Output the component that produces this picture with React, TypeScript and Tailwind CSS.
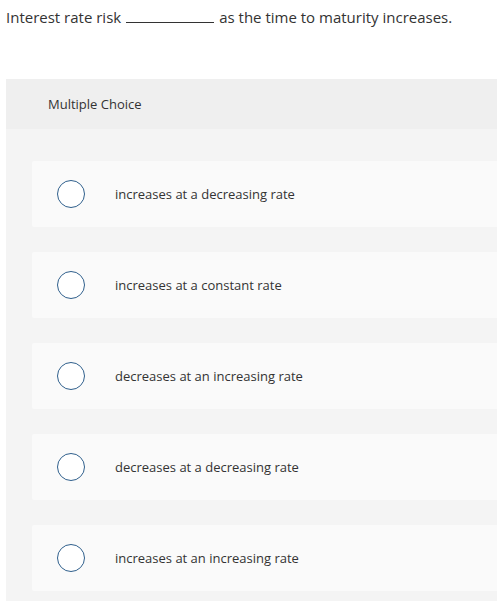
import React from "react";

const options = [
  "increases at a decreasing rate",
  "increases at a constant rate",
  "decreases at an increasing rate",
  "decreases at a decreasing rate",
  "increases at an increasing rate",
];

export default function App() {
  return (
    <div className="w-[497px] h-[601px] overflow-hidden bg-white text-[#333333]" style={{ fontFamily: "'Open Sans', sans-serif" }}>
      <div className="pl-[6px] pt-[7px] text-[15px] leading-[20px] flex items-end">
        <span>Interest rate risk</span>
        <span className="inline-block w-[88px] border-b border-[#333333] mx-[5px] mb-[4px]" />
        <span>as the time to maturity increases.</span>
      </div>
      <div className="ml-[6px] mt-[52px] bg-[#f4f4f4] w-[560px] h-[600px]">
        <div className="h-[50px] bg-[#efefef] flex items-center pl-[42px] text-[13px] pt-[1px]">Multiple Choice</div>
        <div className="pt-[32px] pl-[26px] flex flex-col gap-[25px]">
          {options.map((o) => (
            <div key={o} className="h-[66px] bg-[#fafafa] rounded-[2px] flex items-center">
              <div className="ml-[25px] w-[28px] h-[28px] rounded-full border-[1.5px] border-[#2f5f8c] bg-white" />
              <span className="ml-[30px] text-[13px] pt-[1px]">{o}</span>
            </div>
          ))}
        </div>
      </div>
    </div>
  );
}
